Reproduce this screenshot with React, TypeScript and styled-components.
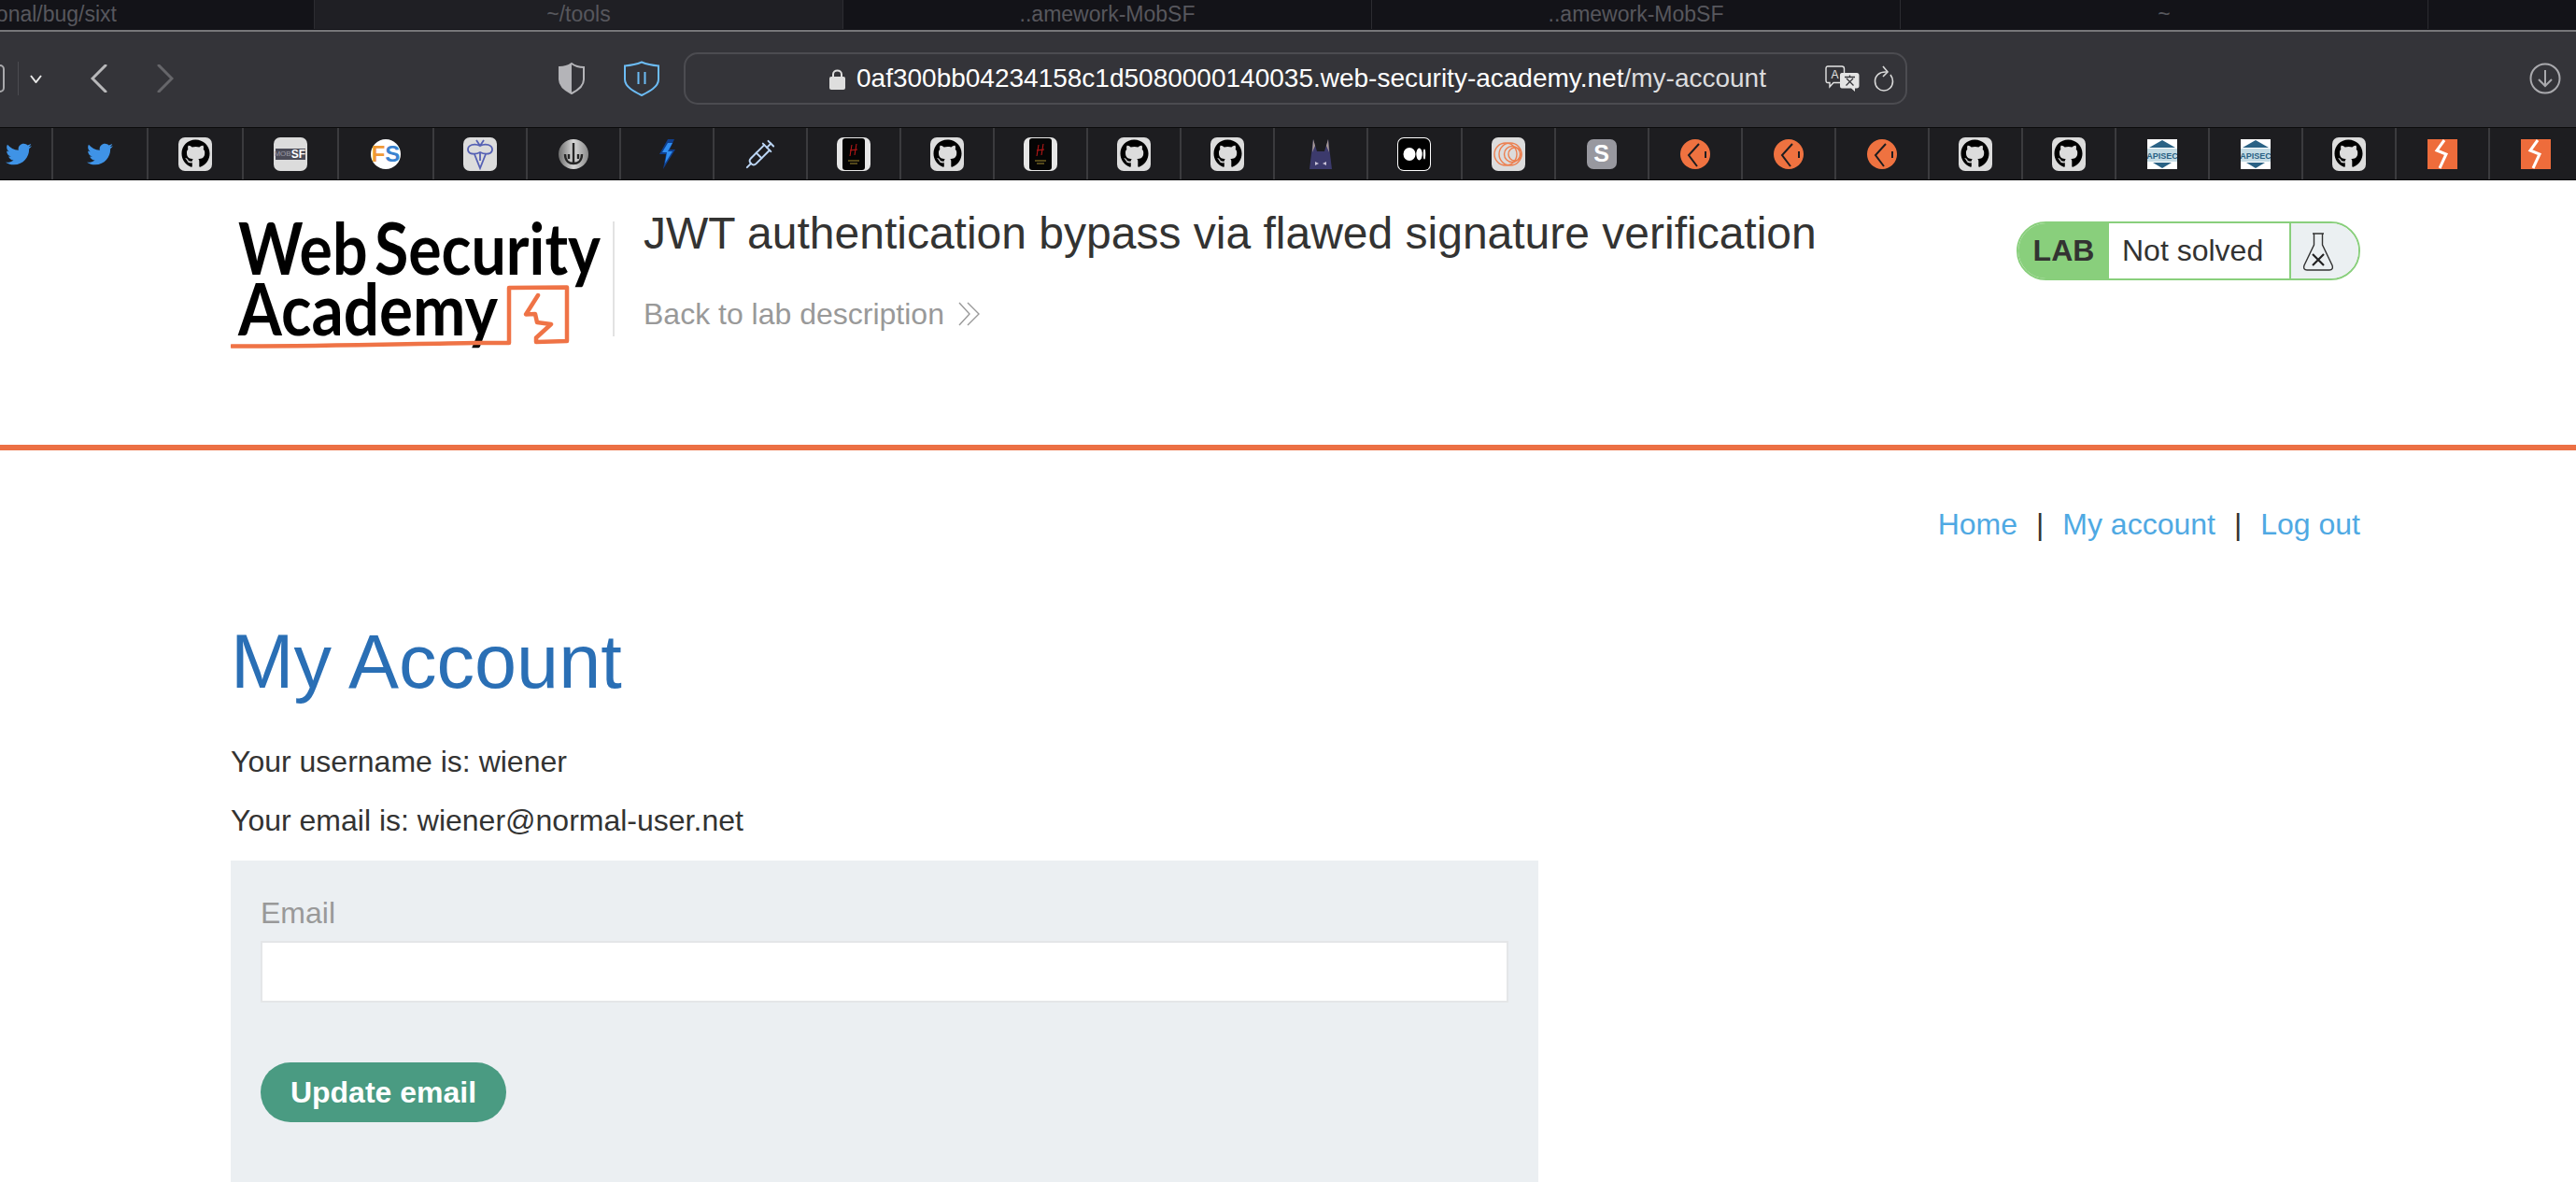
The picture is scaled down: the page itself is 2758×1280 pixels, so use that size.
import React from 'react'
import styled, { createGlobalStyle } from 'styled-components'
import { FaGithub, FaTwitter } from 'react-icons/fa'
import { Syringe } from 'lucide-react'

const GlobalStyle = createGlobalStyle`
    html, body {
        margin: 0;
        padding: 0;
        background: #fff;
    }
    body {
        font-family: 'Liberation Sans', Arial, sans-serif;
    }
`

const Page = styled.div`
    width: 2758px;
    height: 1280px;
    overflow: hidden;
    background: #fff;
`

/* terminal tabs at the very top */
const TabBar = styled.div`
    height: 32px;
    display: flex;
    background: #131318;
`

const Tab = styled.div<{ $active?: boolean; $width: number; $pad?: number }>`
    width: ${(p) => p.$width}px;
    flex: none;
    box-sizing: border-box;
    height: 31px;
    padding-right: ${(p) => p.$pad || 0}px;
    display: flex;
    align-items: center;
    justify-content: ${(p) => (p.$pad ? 'flex-end' : 'center')};
    font-size: 23px;
    color: #57575d;
    white-space: nowrap;
    border-right: 1px solid #2c2c31;
    background: ${(p) => (p.$active ? '#1f1f24' : 'transparent')};
`

/* browser toolbar */
const Toolbar = styled.div`
    height: 104px;
    display: flex;
    align-items: center;
    box-sizing: border-box;
    padding-bottom: 2px;
    background: #343439;
    border-top: 2px solid #77777a;
`

const SidebarStub = styled.div`
    width: 25px;
    height: 30px;
    margin-left: -20px;
    flex: none;
    box-sizing: border-box;
    border: 2px solid #a9a9ac;
    border-radius: 5px;
`

const ToolbarDivider = styled.div`
    width: 1px;
    height: 36px;
    margin-left: 14px;
    flex: none;
    background: #4b4b50;
`

const ToolIcon = styled.svg<{ $left: number; $right?: number }>`
    margin-left: ${(p) => p.$left}px;
    margin-right: ${(p) => p.$right || 0}px;
    flex: none;
    display: block;
`

const UrlBar = styled.div`
    width: 1310px;
    height: 56px;
    margin-left: 26px;
    flex: none;
    box-sizing: border-box;
    display: flex;
    align-items: center;
    padding: 0 12px 0 154px;
    border: 2px solid #4c4c51;
    border-radius: 15px;
`

const UrlText = styled.div`
    margin-left: 12px;
    font-family: 'Liberation Sans', Arial, sans-serif;
    font-size: 28px;
    color: #fff;
    white-space: nowrap;
`

const UrlPath = styled.span`
    color: #dcdcde;
`

const Spacer = styled.div`
    flex: 1;
`

/* bookmarks strip */
const BookmarkBar = styled.div`
    height: 57px;
    display: flex;
    box-sizing: border-box;
    background: #1d1d20;
    border-top: 1px solid #0b0b0c;
    border-bottom: 1px solid #0b0b0c;
`

const BookmarkCell = styled.div<{ $width: number; $first?: boolean }>`
    width: ${(p) => p.$width}px;
    flex: none;
    box-sizing: border-box;
    padding-right: ${(p) => (p.$first ? '16px' : '0')};
    display: flex;
    align-items: center;
    justify-content: center;
    border-right: 2px solid #3b3b3e;
`

const Tile = styled.div<{ $bg?: string }>`
    width: 36px;
    height: 36px;
    border-radius: 7px;
    display: flex;
    align-items: center;
    justify-content: center;
    background: ${(p) => p.$bg || '#dcdcdc'};
`

const MobStripe = styled.div`
    width: 32px;
    height: 12px;
    display: flex;
    align-items: center;
    justify-content: flex-end;
    font-size: 12px;
    font-weight: 700;
    color: #fff;
    background: #4b4b57;
`

const MobPrefix = styled.span`
    font-size: 8px;
    font-weight: 400;
    color: #9a9aa4;
`

const RoundBadge = styled.div`
    width: 32px;
    height: 32px;
    border-radius: 50%;
    display: flex;
    align-items: center;
    justify-content: center;
    font-size: 24px;
    font-weight: 700;
    background: #fff;
`

const FsLetter = styled.span<{ $color: string }>`
    color: ${(p) => p.$color};
`

const SLetter = styled.div`
    width: 32px;
    height: 32px;
    border-radius: 7px;
    display: flex;
    align-items: center;
    justify-content: center;
    font-size: 25px;
    font-weight: 700;
    color: #fff;
    background: #98989f;
`

/* lab header */
const LabHeader = styled.header`
    height: 283px;
    box-sizing: border-box;
    padding: 33px 231px 0 247px;
    display: flex;
    align-items: flex-start;
`

const LogoSvg = styled.svg`
    flex: none;
    margin-top: -4px;
`

const HeaderDivider = styled.div`
    width: 2px;
    height: 123px;
    margin: 11px 31px 0 9px;
    flex: none;
    background: #e2e2e2;
`

const TitleBlock = styled.div`
    flex: 1;
`

const LabTitle = styled.h2`
    margin: 0;
    font-size: 48px;
    line-height: 48px;
    font-weight: 400;
    color: #333332;
    white-space: nowrap;
`

const BackLink = styled.a`
    margin-top: 46px;
    display: flex;
    align-items: center;
    gap: 15px;
    font-size: 32px;
    line-height: 32px;
    color: #999;
`

const LabStatus = styled.div`
    width: 368px;
    height: 63px;
    margin-top: 11px;
    flex: none;
    box-sizing: border-box;
    display: flex;
    overflow: hidden;
    border: 2px solid #89cf7c;
    border-radius: 32px;
    background: #fff;
`

const LabTag = styled.div`
    width: 97px;
    flex: none;
    display: flex;
    align-items: center;
    justify-content: center;
    font-size: 32px;
    font-weight: 700;
    color: #333332;
    background: #89cf7c;
`

const LabState = styled.div`
    flex: 1;
    padding-left: 14px;
    display: flex;
    align-items: center;
    font-size: 32px;
    color: #333332;
`

const LabFlask = styled.div`
    width: 74px;
    flex: none;
    box-sizing: border-box;
    padding-left: 12px;
    display: flex;
    align-items: center;
    border-left: 2px solid #89cf7c;
    background: #ebf0f2;
`

const OrangeRule = styled.div`
    height: 6px;
    background: #ec7044;
`

/* page body */
const Content = styled.main`
    padding: 63px 231px 0 247px;
`

const TopLinks = styled.nav`
    display: flex;
    justify-content: flex-end;
    font-size: 32px;
    line-height: 32px;
`

const TopLink = styled.a`
    color: #4fa9e3;
`

const LinkSeparator = styled.span`
    margin: 0 20px;
    color: #333332;
`

const Heading = styled.h1`
    margin: 91px 0 50px;
    font-size: 81px;
    line-height: 81px;
    font-weight: 400;
    color: #2a6fb5;
`

const InfoLine = styled.p`
    margin: 0 0 31px;
    font-size: 32px;
    line-height: 32px;
    color: #333332;
    white-space: nowrap;
`

const EmailPanel = styled.form`
    width: 1400px;
    height: 344px;
    margin-top: -4px;
    box-sizing: border-box;
    padding: 40px 32px 0;
    background: #ebeff2;
`

const FieldLabel = styled.label`
    display: block;
    font-size: 32px;
    line-height: 32px;
    color: #999;
`

const EmailInput = styled.input`
    display: block;
    width: 1336px;
    height: 66px;
    margin-top: 14px;
    box-sizing: border-box;
    border: 2px solid #e4e6e8;
    background: #fff;
    outline: none;
`

const UpdateButton = styled.button`
    display: block;
    width: 263px;
    height: 64px;
    margin-top: 64px;
    padding: 0;
    border: 0;
    border-radius: 32px;
    font-family: inherit;
    font-size: 32px;
    font-weight: 700;
    color: #fff;
    background: #4a9b82;
`

const Logo = () => (
    <LogoSvg width="400" height="170" viewBox="0 -15 400 170">
        <text
            x="8"
            y="57"
            fontFamily="Lato, 'Noto Sans', sans-serif"
            fontWeight="700"
            fontSize="76"
            wordSpacing="-10"
            textLength="388"
            lengthAdjust="spacingAndGlyphs"
            fill="#000"
        >
            Web Security
        </text>
        <text
            x="8"
            y="122"
            fontFamily="Lato, 'Noto Sans', sans-serif"
            fontWeight="700"
            fontSize="76"
            textLength="278"
            lengthAdjust="spacingAndGlyphs"
            fill="#000"
        >
            Academy
        </text>
        <path
            d="M1 133.5 C 90 134 190 131 263 130 L 298 130 L 298 71 L 360 70.5 L 360 128 L 327 129 L 327 124.5 L 343 110 L 328 108 L 326 99 L 316 99.5 L 329 79"
            fill="none"
            stroke="#ef7346"
            strokeWidth="4.5"
            strokeLinejoin="round"
            strokeLinecap="round"
        />
    </LogoSvg>
)

const FlaskIcon = () => (
    <svg width="34" height="42" viewBox="0 0 34 42">
        <path
            d="M11 2 H23 M12.5 2 V14 L2 36 C1 39 2 41 5 41 H29 C32 41 33 39 32 36 L21.5 14 V2"
            fill="none"
            stroke="#333"
            strokeWidth="1.4"
        />
        <path d="M11 24 L23 36 M23 24 L11 36" stroke="#222" strokeWidth="2.2" />
    </svg>
)

const Bookmark = ({ kind }: { kind: string }) => {
    switch (kind) {
        case 'twitter':
            return <FaTwitter size={28} color="#3f93e6" />
        case 'github':
            return (
                <Tile>
                    <FaGithub size={31} color="#000" />
                </Tile>
            )
        case 'mobsf':
            return (
                <Tile>
                    <MobStripe>
                        <MobPrefix>MOB</MobPrefix>SF
                    </MobStripe>
                </Tile>
            )
        case 'fs':
            return (
                <RoundBadge>
                    <FsLetter $color="#f09a35">F</FsLetter>
                    <FsLetter $color="#3a83d0">S</FsLetter>
                </RoundBadge>
            )
        case 'bee':
            return (
                <Tile>
                    <svg width="30" height="34" viewBox="0 0 30 34" fill="none" stroke="#5560b4" strokeWidth="1.8">
                        <path d="M11 2 L15 8 L19 2 M15 8 C9 5 2 7 2 12 C2 17 9 18 15 15 C21 18 28 17 28 12 C28 7 21 5 15 8 Z" />
                        <path d="M9 17 L15 32 L21 17 M15 15 V24" />
                    </svg>
                </Tile>
            )
        case 'anchor':
            return (
                <svg width="32" height="32" viewBox="0 0 32 32">
                    <defs>
                        <linearGradient id="metal" x1="0" x2="1" y1="0" y2="0">
                            <stop offset="0" stopColor="#6d6d6d" />
                            <stop offset="0.5" stopColor="#d8d8d8" />
                            <stop offset="1" stopColor="#8a8a8a" />
                        </linearGradient>
                    </defs>
                    <circle cx="16" cy="16" r="16" fill="url(#metal)" />
                    <path d="M16 4 V25 M7 16 C7 24 12 26 16 26 C20 26 25 24 25 16 M11 16 V21 M21 16 V21" fill="none" stroke="#262626" strokeWidth="2.4" />
                </svg>
            )
        case 'bolt':
            return (
                <svg width="18" height="32" viewBox="0 0 18 32">
                    <path d="M10 0 H17 L12 11 H18 L5 32 L8 16 H1 Z" fill="#0f3f8e" />
                    <path d="M10 4 H15 L10 13 H15 L7 26 L9 14 H4 Z" fill="#2f8df0" />
                </svg>
            )
        case 'syringe':
            return <Syringe size={34} color="#bcd6f5" strokeWidth={1.4} />
        case 'phone':
            return (
                <Tile $bg="#e6e6e6">
                    <svg width="26" height="36" viewBox="0 0 26 36">
                        <rect x="1" y="1" width="24" height="34" rx="3" fill="#050505" />
                        <path d="M11 8 L9 20 M16 7 L14 19 M9 14 L17 13" stroke="#c01818" strokeWidth="1" />
                        <path d="M7 25 H19 M9 28 H17" stroke="#a08a30" strokeWidth="1" />
                    </svg>
                </Tile>
            )
        case 'batman':
            return (
                <svg width="30" height="32" viewBox="0 0 30 32">
                    <path d="M7 0 L11 13 H19 L23 0 L27 32 H3 Z" fill="#3c3a6c" />
                    <path d="M7 0 L9 7 L6 14 Z M23 0 L21 7 L24 14 Z" fill="#a89a94" />
                    <path d="M9 24 L13 26 L9 28 Z M21 24 L17 26 L21 28 Z" fill="#c9c3d8" />
                </svg>
            )
        case 'medium':
            return (
                <Tile $bg="#fff">
                    <svg width="34" height="34" viewBox="0 0 34 34">
                        <rect width="34" height="34" rx="6" fill="#000" />
                        <ellipse cx="12" cy="17" rx="6.5" ry="7" fill="#fff" />
                        <ellipse cx="22.5" cy="17" rx="3.2" ry="6.5" fill="#fff" />
                        <ellipse cx="28" cy="17" rx="1.2" ry="5.5" fill="#fff" />
                    </svg>
                </Tile>
            )
        case 'rings':
            return (
                <Tile>
                    <svg width="32" height="32" viewBox="0 0 32 32" fill="none" stroke="#ec7f4f" strokeWidth="1.4">
                        <circle cx="13" cy="16" r="12" />
                        <circle cx="18" cy="16" r="12" />
                        <circle cx="20" cy="16" r="8.5" />
                        <circle cx="23" cy="16" r="7" />
                    </svg>
                </Tile>
            )
        case 's':
            return <SLetter>S</SLetter>
        case 'orange':
            return (
                <svg width="32" height="32" viewBox="0 0 32 32">
                    <ellipse cx="16" cy="16" rx="16" ry="16" fill="#ef7240" />
                    <path d="M20 5 L9 17 L18 29" fill="none" stroke="#1d1d20" strokeWidth="2" />
                    <path d="M27 13 V20" stroke="#1d1d20" strokeWidth="2" />
                </svg>
            )
        case 'apisec':
            return (
                <svg width="32" height="32" viewBox="0 0 32 32">
                    <rect width="32" height="32" fill="#fff" />
                    <path d="M16 1 L30 9 H2 Z" fill="#2a6285" />
                    <rect y="10" width="32" height="14" fill="#c4dbe4" />
                    <text x="16" y="21" textAnchor="middle" fontSize="9" fontWeight="700" fill="#2a6285" fontFamily="'Liberation Sans', sans-serif">
                        APISEC
                    </text>
                    <path d="M6 25 H26 L16 31 Z" fill="#2a6285" />
                </svg>
            )
        case 'burp':
            return (
                <svg width="32" height="32" viewBox="0 0 32 32">
                    <rect width="32" height="32" fill="#ee6c3b" />
                    <path d="M18 1 L10 12 L20 16 L13 31" fill="none" stroke="#fff" strokeWidth="3" />
                </svg>
            )
        default:
            return null
    }
}

const bookmarks = [
    'twitter', 'twitter', 'github', 'mobsf', 'fs', 'bee', 'anchor', 'bolt', 'syringe', 'phone',
    'github', 'phone', 'github', 'github', 'batman', 'medium', 'rings', 's', 'orange', 'orange',
    'orange', 'github', 'github', 'apisec', 'apisec', 'github', 'burp', 'burp',
]

// the first few favourites are a little wider than the rest of the strip
const cellWidth = (i: number) => (i === 0 ? 57 : i < 5 ? 102 : 100.05)

export default function App() {
    return (
        <Page>
            <GlobalStyle />
            <TabBar>
                <Tab $width={337} $pad={211}>onal/bug/sixt</Tab>
                <Tab $width={566} $active>~/tools</Tab>
                <Tab $width={566}>..amework-MobSF</Tab>
                <Tab $width={566}>..amework-MobSF</Tab>
                <Tab $width={565}>~</Tab>
            </TabBar>
            <Toolbar>
                <SidebarStub />
                <ToolbarDivider />
                <ToolIcon $left={12} width="13" height="9" viewBox="0 0 13 9">
                    <path d="M1 1 L6.5 8 L12 1" fill="none" stroke="#e8e8e8" strokeWidth="2" />
                </ToolIcon>
                <ToolIcon $left={52} width="18" height="30" viewBox="0 0 18 30">
                    <path d="M16 1 L2 15 L16 29" fill="none" stroke="#b8b8ba" strokeWidth="3" strokeLinecap="round" />
                </ToolIcon>
                <ToolIcon $left={53} width="18" height="30" viewBox="0 0 18 30">
                    <path d="M2 1 L16 15 L2 29" fill="none" stroke="#66666a" strokeWidth="3" strokeLinecap="round" />
                </ToolIcon>
                <ToolIcon $left={412} width="28" height="34" viewBox="0 0 28 34">
                    <path d="M14 1 C18 4 22 5 27 5 V18 C27 25 20 30 14 33 C8 30 1 25 1 18 V5 C6 5 10 4 14 1 Z" fill="none" stroke="#b4b4b8" strokeWidth="2" />
                    <path d="M14 1 C10 4 6 5 1 5 V18 C1 25 8 30 14 33 Z" fill="#b4b4b8" />
                </ToolIcon>
                <ToolIcon $left={42} width="38" height="38" viewBox="0 0 38 38">
                    <path d="M19 1.5 C25 4 31 5 37 5.5 V20 C37 28 27 33 19 37 C11 33 1 28 1 20 V5.5 C7 5 13 4 19 1.5 Z" fill="none" stroke="#6cbcf5" strokeWidth="2" />
                    <path d="M15.5 12 V25 M22.5 12 V25" stroke="#6cbcf5" strokeWidth="2" />
                </ToolIcon>
                <UrlBar>
                    <svg width="17" height="23" viewBox="0 0 17 23">
                        <path d="M4 10 V6.5 C4 1 13 1 13 6.5 V10" fill="none" stroke="#dedede" strokeWidth="2" />
                        <rect y="9" width="17" height="14" rx="2" fill="#dedede" />
                    </svg>
                    <UrlText>
                        0af300bb04234158c1d5080000140035.web-security-academy.net<UrlPath>/my-account</UrlPath>
                    </UrlText>
                    <Spacer />
                    <svg width="37" height="28" viewBox="0 0 37 28">
                        <path d="M3 1 H18 C19.5 1 20.5 2 20.5 3.5 V16 C20.5 17.5 19.5 18.5 18 18.5 H9 L5 23 V18.5 H3 C1.5 18.5 1 17.5 1 16 V3.5 C1 2 1.5 1 3 1 Z" fill="#343439" stroke="#e4e4e4" strokeWidth="1.4" />
                        <text x="10.5" y="14" textAnchor="middle" fontSize="12" fill="#e4e4e4" fontFamily="'Liberation Sans', sans-serif">A</text>
                        <path d="M18 8 H34 C35.5 8 36.5 9 36.5 10.5 V22 C36.5 23.5 35.5 24.5 34 24.5 H32 V28 L28 24.5 H18 C16.5 24.5 16 23.5 16 22 V10.5 C16 9 16.5 8 18 8 Z" fill="#e4e4e4" />
                        <path d="M21 12.5 H32 M26.5 10.5 V12.5 M22.5 21.5 L30 14 M23 14 L30.5 21.5" stroke="#343439" strokeWidth="1.3" fill="none" />
                    </svg>
                    <ToolIcon $left={15} width="22" height="28" viewBox="0 0 22 28">
                        <path d="M14 7 C6 6.5 1.5 11 1.5 17 C1.5 23 6 27 11 27 C16 27 20.5 23 20.5 17 C20.5 14 19.5 12 18 10" fill="none" stroke="#d8d8d8" strokeWidth="1.6" />
                        <path d="M10 1 L15 7 L10 12" fill="none" stroke="#d8d8d8" strokeWidth="1.6" />
                    </ToolIcon>
                </UrlBar>
                <Spacer />
                <ToolIcon $left={0} $right={16} width="34" height="34" viewBox="0 0 34 34">
                    <circle cx="17" cy="17" r="15.5" fill="none" stroke="#a9a9ad" strokeWidth="2" />
                    <path d="M17 8 V25 M10 18 L17 25 L24 18" fill="none" stroke="#a9a9ad" strokeWidth="2" />
                </ToolIcon>
            </Toolbar>
            <BookmarkBar>
                {bookmarks.map((kind, i) => (
                    <BookmarkCell key={i} $width={cellWidth(i)} $first={i === 0}>
                        <Bookmark kind={kind} />
                    </BookmarkCell>
                ))}
            </BookmarkBar>
            <LabHeader>
                <Logo />
                <HeaderDivider />
                <TitleBlock>
                    <LabTitle>JWT authentication bypass via flawed signature verification</LabTitle>
                    <BackLink>
                        Back to lab description
                        <svg width="24" height="26" viewBox="0 0 24 26" fill="none" stroke="#999" strokeWidth="1.4">
                            <path d="M1 1 L12 13 L1 25 M10 1 L22 13 L10 25" />
                        </svg>
                    </BackLink>
                </TitleBlock>
                <LabStatus>
                    <LabTag>LAB</LabTag>
                    <LabState>Not solved</LabState>
                    <LabFlask>
                        <FlaskIcon />
                    </LabFlask>
                </LabStatus>
            </LabHeader>
            <OrangeRule />
            <Content>
                <TopLinks>
                    <TopLink>Home</TopLink>
                    <LinkSeparator>|</LinkSeparator>
                    <TopLink>My account</TopLink>
                    <LinkSeparator>|</LinkSeparator>
                    <TopLink>Log out</TopLink>
                </TopLinks>
                <Heading>My Account</Heading>
                <InfoLine>Your username is: wiener</InfoLine>
                <InfoLine>Your email is: wiener@normal-user.net</InfoLine>
                <EmailPanel>
                    <FieldLabel>Email</FieldLabel>
                    <EmailInput type="text" />
                    <UpdateButton type="button">Update email</UpdateButton>
                </EmailPanel>
            </Content>
        </Page>
    )
}
